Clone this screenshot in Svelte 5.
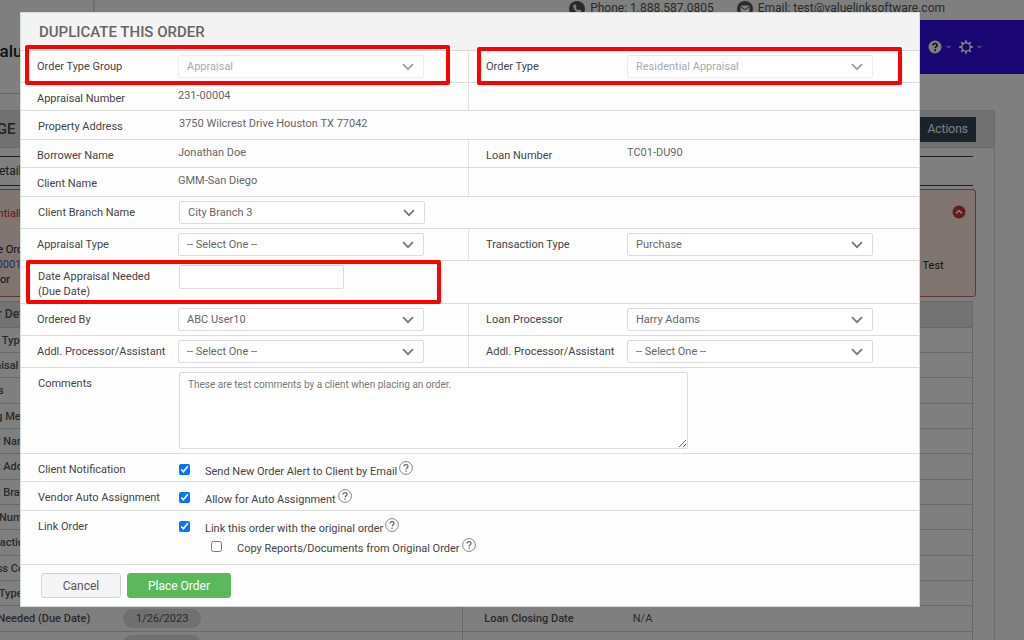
<script>
    const phone = '1.888.587.0805';
    const email = 'test@valuelinksoftware.com';

    const details = [
        { label: 'Order Type' },
        { label: 'Appraisal Number' },
        { label: 'Status' },
        { label: 'Billing Method' },
        { label: 'Client Name' },
        { label: 'Client Address' },
        { label: 'Client Branch' },
        { label: 'Loan Number' },
        { label: 'Transaction Type' },
        { label: 'Access Contact' },
        { label: 'Loan Type' },
        { label: 'Date Needed (Due Date)', value: '1/26/2023', other: 'Loan Closing Date', otherValue: 'N/A' },
        { label: '', value: '1/27/2023' },
    ];

    // A row with one cell spans the whole form, null leaves the right half empty
    const rows = [
        [
            { id: 'group', label: 'Order Type Group', options: ['Appraisal'], disabled: true, mark: 'mark-group' },
            { id: 'type', label: 'Order Type', options: ['Residential Appraisal'], disabled: true, mark: 'mark-type' },
        ],
        [{ label: 'Appraisal Number', text: '231-00004' }, null],
        [{ label: 'Property Address', text: '3750 Wilcrest Drive Houston TX 77042' }],
        [{ label: 'Borrower Name', text: 'Jonathan Doe' }, { label: 'Loan Number', text: 'TC01-DU90' }],
        [{ label: 'Client Name', text: 'GMM-San Diego' }, null],
        [{ id: 'branch', label: 'Client Branch Name', options: ['City Branch 3'] }],
        [
            { id: 'appraisal', label: 'Appraisal Type', options: ['-- Select One --'] },
            { id: 'transaction', label: 'Transaction Type', options: ['Purchase'] },
        ],
        [{ id: 'due', label: 'Date Appraisal Needed (Due Date)', date: true, mark: 'mark-due' }],
        [
            { id: 'ordered', label: 'Ordered By', options: ['ABC User10'] },
            { id: 'processor', label: 'Loan Processor', options: ['Harry Adams'] },
        ],
        [
            { id: 'addl1', label: 'Addl. Processor/Assistant', options: ['-- Select One --'] },
            { id: 'addl2', label: 'Addl. Processor/Assistant', options: ['-- Select One --'] },
        ],
        [{ id: 'comments', label: 'Comments', area: true }],
        [{ label: 'Client Notification', checks: [{ text: 'Send New Order Alert to Client by Email', on: true }] }],
        [{ label: 'Vendor Auto Assignment', checks: [{ text: 'Allow for Auto Assignment', on: true }] }],
        [
            {
                label: 'Link Order',
                checks: [
                    { text: 'Link this order with the original order', on: true },
                    { text: 'Copy Reports/Documents from Original Order', on: false, sub: true },
                ],
            },
        ],
    ];

    let dueDate = $state('');
    let comments = $state('These are test comments by a client when placing an order.');
</script>

{#snippet help()}
    <svg class="help" viewBox="0 0 14 14" aria-hidden="true">
        <circle cx="7" cy="7" r="6.4" fill="none" stroke="#777" stroke-width="0.9" />
        <path d="M5 5.5C5 4.2 5.8 3.6 7 3.6s2 .7 2 1.8c0 1.3-1.8 1.5-1.8 3" fill="none" stroke="#666" stroke-width="1.2" />
        <circle cx="7.1" cy="10.2" r="0.8" fill="#666" />
    </svg>
{/snippet}

<div class="screen">
    <div class="page">
        <header>
            <div class="logo">ValueLink</div>
            <div class="head-right">
                <div class="contact">
                    <svg viewBox="0 0 16 16" aria-hidden="true">
                        <circle cx="8" cy="8" r="8" fill="#555" />
                        <path d="M4.6 4l1.6-.8 1.5 2.4-1 1.1c.5 1.2 1.2 2 2.5 2.6l1.1-1 2.3 1.6-.9 1.7c-.7.6-2.2.4-3.8-.6C6 9.8 4.3 7.2 4.2 5.2z" fill="#fff" />
                    </svg>
                    <span>Phone: {phone}</span>
                    <svg class="mail" viewBox="0 0 16 16" aria-hidden="true">
                        <circle cx="8" cy="8" r="8" fill="#555" />
                        <rect x="3.5" y="4.5" width="9" height="7" rx="1" fill="#fff" />
                        <path d="M3.5 5.5L8 8.6l4.5-3.1" fill="none" stroke="#555" />
                    </svg>
                    <span>Email: {email}</span>
                </div>
                <nav>
                    <button aria-label="Help">
                        <svg viewBox="0 0 14 14">
                            <circle cx="7" cy="7" r="6.5" fill="#fff" />
                            <path d="M4.9 5.5C4.9 4.2 5.8 3.5 7 3.5s2.1.7 2.1 1.8c0 1.4-1.9 1.5-1.9 3" fill="none" stroke="#222" stroke-width="1.6" />
                            <circle cx="7.1" cy="10.3" r="1" fill="#222" />
                        </svg>
                        <svg class="caret" viewBox="0 0 5 4"><path d="M.5.8l2 2 2-2" fill="none" stroke="#fff" /></svg>
                    </button>
                    <button aria-label="Settings">
                        <svg viewBox="0 0 14 14">
                            <circle cx="7" cy="7" r="4.2" fill="none" stroke="#fff" stroke-width="1.4" />
                            <path d="M7 .2v2.6M7 11.2v2.6M.2 7h2.6M11.2 7h2.6M2.2 2.2L4 4M10 10l1.8 1.8M2.2 11.8L4 10M10 4l1.8-1.8" stroke="#fff" stroke-width="1.8" />
                        </svg>
                        <svg class="caret" viewBox="0 0 5 4"><path d="M.5.8l2 2 2-2" fill="none" stroke="#fff" /></svg>
                    </button>
                </nav>
            </div>
        </header>

        <main>
            <div class="title-bar">
                <h1>MANAGE ORDER</h1>
                <button class="actions">Actions</button>
            </div>
            <div class="tabs"><a href="#details">Details</a></div>
            <div class="alert">
                <div class="alert-text">
                    <p class="alert-title">Potentially</p>
                    <p>Same Order</p>
                    <p><a href="#order">231-0001</a></p>
                    <p>Vendor</p>
                </div>
                <div class="alert-side">
                    <svg viewBox="0 0 14 14" aria-hidden="true">
                        <circle cx="7" cy="7" r="6.5" fill="#c8343f" />
                        <path d="M4 8.4l3-2.8 3 2.8" fill="none" stroke="#fff" stroke-width="1.6" />
                    </svg>
                    <p>- Test</p>
                </div>
            </div>
            <table>
                <colgroup>
                    <col class="narrow" />
                    <col />
                    <col class="narrow" />
                    <col />
                </colgroup>
                <thead>
                    <tr><th colspan="4">Order Details</th></tr>
                </thead>
                <tbody>
                    {#each details as row}
                        <tr>
                            <th>{row.label}</th>
                            <td>{#if row.value}<span class="pill">{row.value}</span>{/if}</td>
                            <th class="second">{row.other ?? ''}</th>
                            <td>{row.otherValue ?? ''}</td>
                        </tr>
                    {/each}
                </tbody>
            </table>
        </main>
    </div>

    <div class="backdrop">
        <form class="modal" onsubmit={(e) => e.preventDefault()}>
            <h2>DUPLICATE THIS ORDER</h2>
            <div class="rows">
                {#each rows as row}
                    <div class="row" class:full={row.length === 1}>
                        {#each row as cell}
                            <div class="cell">
                                {#if cell}
                                    {#if cell.id}
                                        <label class="label" for={cell.id}>{cell.label}</label>
                                    {:else}
                                        <span class="label">{cell.label}</span>
                                    {/if}
                                    {#if cell.options}
                                        <div class="select">
                                            <select id={cell.id} disabled={cell.disabled}>
                                                {#each cell.options as option}
                                                    <option>{option}</option>
                                                {/each}
                                            </select>
                                            <svg class:dim={cell.disabled} viewBox="0 0 12 8" aria-hidden="true">
                                                <path d="M1 1.2l5 5 5-5" fill="none" stroke="#777" stroke-width="1.7" />
                                            </svg>
                                        </div>
                                    {:else if cell.text}
                                        <span class="value">{cell.text}</span>
                                    {:else if cell.date}
                                        <input class="date" id={cell.id} type="text" bind:value={dueDate} />
                                    {:else if cell.area}
                                        <textarea id={cell.id} bind:value={comments}></textarea>
                                    {:else if cell.checks}
                                        <div class="checks">
                                            {#each cell.checks as check}
                                                <label class="check" class:sub={check.sub}>
                                                    <input type="checkbox" checked={check.on} />
                                                    <span>{check.text}</span>
                                                    {@render help()}
                                                </label>
                                            {/each}
                                        </div>
                                    {/if}
                                    {#if cell.mark}
                                        <div class="mark {cell.mark}"></div>
                                    {/if}
                                {/if}
                            </div>
                        {/each}
                    </div>
                {/each}
            </div>
            <footer>
                <button type="button" class="btn cancel">Cancel</button>
                <button type="submit" class="btn place">Place Order</button>
            </footer>
        </form>
    </div>
</div>

<style>
    .screen {
        position: relative;
        height: 100vh;
        overflow: hidden;
        background: #fff;
        color: #555;
        font-family: Roboto, "Open Sans", sans-serif;
        font-size: 11px;
        line-height: 15px;
    }

    .screen * {
        box-sizing: border-box;
    }

    button, input, select, textarea {
        font-family: inherit;
        margin: 0;
    }

    p, h1, h2 {
        margin: 0;
    }

    /* page behind the dialog */
    .page {
        margin-left: -48px;
    }

    header {
        display: flex;
        height: 94px;
    }

    .logo {
        width: 143px;
        padding: 42px 0 0 37px;
        border-right: 2px solid #ddd;
        border-bottom: 1px solid #ccc;
        color: #222;
        font-size: 17px;
        font-weight: 500;
        line-height: 18px;
    }

    .head-right {
        flex: 1;
    }

    .contact {
        display: flex;
        align-items: center;
        justify-content: flex-end;
        gap: 5px;
        height: 17px;
        padding-right: 79px;
        color: #555;
        font-size: 12px;
    }

    .contact svg {
        width: 16px;
        height: 16px;
    }

    .contact .mail {
        margin-left: 18px;
    }

    nav {
        display: flex;
        align-items: center;
        justify-content: flex-end;
        gap: 8px;
        height: 54px;
        margin-top: 3px;
        padding-right: 42px;
        background: #340de4;
    }

    nav button {
        display: flex;
        align-items: center;
        gap: 4px;
        padding: 0;
        border: 0;
        background: none;
    }

    nav svg {
        width: 14px;
        height: 14px;
    }

    nav .caret {
        width: 5px;
        height: 4px;
    }

    main {
        margin: 16px 29px 0 0;
        border: 1px solid #d8d8d8;
    }

    .title-bar {
        display: flex;
        align-items: center;
        justify-content: space-between;
        height: 37px;
        padding-right: 18px;
        border-bottom: 1px solid #d0d0d0;
        background: #e2e2e2;
    }

    h1 {
        font-size: 15px;
        font-weight: 500;
        color: #444;
    }

    .actions {
        width: 100px;
        height: 25px;
        padding: 0 8px;
        border: 0;
        background: #344652;
        color: #fff;
        font-size: 12px;
        text-align: right;
    }

    .tabs {
        margin: 8px 21px 0 0;
        padding: 7px 0 6px 38px;
        border-top: 1px solid #344652;
        border-bottom: 1px solid #344652;
        font-size: 12px;
    }

    .tabs a {
        color: #333;
        text-decoration: none;
    }

    .alert {
        display: flex;
        justify-content: space-between;
        height: 108px;
        margin: 3px 18px 4px 0;
        border: 1px solid #cc6a70;
        border-radius: 3px;
        background: #ffe8e0;
        color: #222;
    }

    .alert-text {
        padding: 16px 0 0 21px;
    }

    .alert-title {
        margin-bottom: 21px;
        color: #c8343f;
    }

    .alert-text a {
        color: #3b5bb5;
        text-decoration: none;
    }

    .alert-side {
        width: 58px;
    }

    .alert-side svg {
        display: block;
        width: 14px;
        height: 14px;
        margin: 15px 9px 39px auto;
    }

    table {
        width: calc(100% - 21px);
        border-collapse: collapse;
        table-layout: fixed;
    }

    .narrow {
        width: 170px;
    }

    thead th {
        height: 26px;
        background: #e6e6e6;
        font-size: 12px;
    }

    tr {
        height: 25px;
    }

    tbody tr:nth-child(3n) {
        height: 26px;
    }

    th, td {
        padding: 0;
        border: 0 solid #d0d0d0;
        border-width: 1px 0;
        font-weight: 400;
        text-align: left;
    }

    th {
        padding-left: 19px;
        color: #555;
        font-weight: 500;
    }

    tr > :last-child {
        border-right-width: 1px;
    }

    th.second {
        border-left-width: 1px;
        padding-left: 21px;
    }

    .pill {
        display: inline-block;
        padding: 2px 13px;
        border-radius: 10px;
        background: #e0e0e0;
    }

    /* dialog */
    .backdrop {
        position: absolute;
        inset: 0;
        padding: 12px 104px 0 20px;
        background: rgba(0, 0, 0, 0.5);
    }

    .modal {
        border: 1px solid #d5dcd7;
        background: #fefefe;
        color: #666;
    }

    h2 {
        height: 38px;
        padding: 0 18px;
        border-bottom: 1px solid #d5dcd7;
        background: #f3f3f3;
        font-size: 15px;
        font-weight: 500;
        line-height: 38px;
    }

    .row {
        display: flex;
        min-height: 28px;
        border-bottom: 1px solid #d9dedb;
    }

    .row:nth-child(odd) {
        min-height: 29px;
    }

    .cell {
        position: relative;
        display: flex;
        flex: 1;
        align-items: flex-start;
    }

    .row:not(.full) .cell:first-child {
        flex: none;
        width: calc(50% - 2px);
    }

    .cell + .cell {
        border-left: 1px solid #e2e2e2;
    }

    .label {
        width: 157px;
        padding: 8px 12px 4px 16px;
        color: #444;
    }

    .full .label,
    .cell + .cell .label {
        width: 158px;
        padding-left: 17px;
    }

    .value {
        padding-top: 5px;
    }

    .select {
        position: relative;
        width: 246px;
        margin: 4px 0;
    }

    .select select {
        display: block;
        appearance: none;
        width: 100%;
        height: 23px;
        padding: 0 24px 0 8px;
        border: 1px solid #dcdcdc;
        border-radius: 2px;
        background: #fff;
        color: #666;
        font-size: 11px;
        opacity: 1;
    }

    .select select:disabled {
        border-color: #ececec;
        color: #aaa;
    }

    .select svg {
        position: absolute;
        top: 8px;
        right: 10px;
        width: 12px;
        height: 8px;
        pointer-events: none;
    }

    .select svg.dim {
        opacity: 0.7;
    }

    .date {
        width: 165px;
        height: 24px;
        margin-top: 4px;
        border: 1px solid #dcdcdc;
        border-radius: 2px;
    }

    textarea {
        width: 509px;
        height: 77px;
        margin: 4px 0;
        padding: 5px 8px;
        border: 1px solid #dcdcdc;
        border-radius: 2px;
        background: #fff;
        color: #777;
        font-size: 10px;
        line-height: 14px;
    }

    .checks {
        display: flex;
        flex-direction: column;
        gap: 6px;
        padding-top: 10px;
        color: #444;
    }

    .check {
        display: flex;
        height: 14px;
    }

    .check input {
        width: 11px;
        height: 11px;
        margin: 0 15px 0 0;
    }

    .check.sub {
        margin-left: 32px;
    }

    .help {
        width: 14px;
        height: 14px;
        margin: -3px 0 0 2px;
    }

    .row:last-child {
        padding-bottom: 9px;
    }

    .mark {
        position: absolute;
        border: 4px solid #f00;
        border-radius: 2px;
        pointer-events: none;
    }

    .mark-group {
        inset: -6px 18px -3px 4px;
    }

    .mark-type {
        inset: -4px 17px -3px 8px;
    }

    .mark-due {
        width: 415px;
        inset: -1px auto -1px 5px;
    }

    footer {
        display: flex;
        gap: 6px;
        padding: 8px 20px;
    }

    .btn {
        height: 25px;
        border: 1px solid #d5d5d5;
        border-radius: 3px;
        background: #f5f5f5;
        color: #555;
        font-size: 12px;
    }

    .cancel {
        width: 80px;
    }

    .place {
        width: 104px;
        border-color: #5cb85c;
        background: #5cb85c;
        color: #fff;
    }
</style>
